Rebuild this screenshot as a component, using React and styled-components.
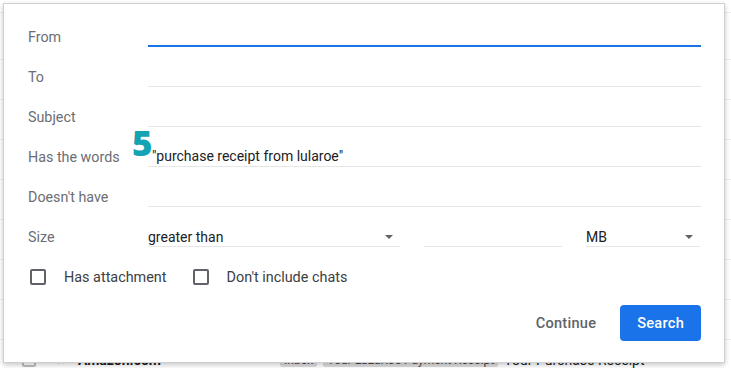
import React from "react";
import styled, { createGlobalStyle } from "styled-components";

const Global = createGlobalStyle`
  html, body { margin: 0; padding: 0; background: #fff; }
  body { font-family: Roboto, "Liberation Sans", Arial, sans-serif; }
`;

const Page = styled.div`
  position: relative;
  width: 731px;
  height: 368px;
  overflow: hidden;
  background: #fff;
`;

const TopStrip = styled.div`
  height: 12px;
  border-bottom: 1px solid #eeeeee;
`;

const ListRow = styled.div`
  height: ${(p) => p.$h || 40}px;
  box-sizing: border-box;
  border-bottom: 1px solid #eeeeee;
  display: grid;
  grid-template-columns: 22px 14px 19px 10px 13px 202px auto auto auto 1fr;
  align-items: center;
  font-size: 14px;
  color: #202124;
`;

const BgBox = styled.span`
  grid-column: 2;
  width: 14px;
  height: 14px;
  border: 2px solid #bdbdbd;
  border-radius: 2px;
  box-sizing: border-box;
`;

const BgStar = styled.span`
  grid-column: 4;
  color: #bbb;
  font-size: 13px;
`;

const BgSender = styled.span`
  grid-column: 6;
  font-weight: 700;
`;

const Chip = styled.span`
  background: #dddddd;
  color: #444;
  font-size: 12px;
  padding: 0 4px;
  margin-right: 6px;
  border-radius: 2px;
`;

const BgSubject = styled.span`
  white-space: nowrap;
`;

const Dialog = styled.div`
  position: absolute;
  top: 3px;
  left: 3px;
  width: 722px;
  height: 360px;
  box-sizing: border-box;
  background: #fff;
  border: 1px solid #cfcfcf;
  box-shadow: 0 2px 5px rgba(0, 0, 0, 0.22);
  padding: 13px 23px 0 24px;
  display: flex;
  flex-direction: column;
`;

const Row = styled.div`
  display: grid;
  grid-template-columns: 120px 1fr;
  align-items: center;
  height: 40px;
`;

const Label = styled.div`
  font-size: 14.3px;
  color: #6b6e72;
`;

const Field = styled.div`
  height: 20px;
  box-sizing: border-box;
  border-bottom: ${(p) => (p.$focused ? "2px solid #1a73e8" : "1px solid #e6e6e6")};
  font-size: 14px;
  line-height: 19px;
  color: #202124;
  padding-left: ${(p) => p.$indent || 0}px;
  white-space: nowrap;
`;

const SizeGroup = styled.div`
  display: grid;
  grid-template-columns: 252px 138px 114px;
  column-gap: 24px;
  align-items: center;
`;

const Select = styled.div`
  height: 20px;
  box-sizing: border-box;
  border-bottom: 1px solid #e6e6e6;
  display: flex;
  align-items: center;
  justify-content: space-between;
  font-size: 14px;
  color: #202124;
  padding-right: 7px;
`;

const Caret = styled.span`
  width: 0;
  height: 0;
  border-left: 4px solid transparent;
  border-right: 4px solid transparent;
  border-top: 4px solid #5f6368;
`;

const CheckRow = styled.div`
  display: flex;
  align-items: center;
  height: 40px;
  padding-left: 2px;
`;

const CheckItem = styled.label`
  display: flex;
  align-items: center;
  gap: 18px;
  margin-right: 26px;
  font-size: 14.4px;
  color: #3c4043;
`;

const Box = styled.span`
  width: 16px;
  height: 16px;
  box-sizing: border-box;
  border: 2px solid #5f6368;
  border-radius: 2px;
`;

const Actions = styled.div`
  display: flex;
  justify-content: flex-end;
  align-items: center;
  gap: 16px;
  margin-top: 8px;
`;

const Button = styled.button`
  height: 36px;
  border: none;
  border-radius: 4px;
  font-family: Roboto, "Liberation Sans", Arial, sans-serif;
  font-size: 14.6px;
  font-weight: 500;
  letter-spacing: 0.25px;
  padding: 0 ${(p) => (p.$primary ? 17 : 8)}px;
  background: ${(p) => (p.$primary ? "#1a73e8" : "transparent")};
  color: ${(p) => (p.$primary ? "#fff" : "#5f6368")};
  cursor: pointer;
`;

const StepBadge = styled.div`
  position: absolute;
  left: 128px;
  top: 119px;
  font-family: "Open Sans", Lato, sans-serif;
  font-weight: 800;
  font-size: 35px;
  line-height: 40px;
  color: #14a3b3;
`;

const fields = [
  { label: "From", focused: true },
  { label: "To" },
  { label: "Subject" },
  { label: "Has the words", value: "\"purchase receipt from lularoe\"", indent: 4 },
  { label: "Doesn't have" },
];

export default function App() {
  return (
    <Page>
      <Global />
      <TopStrip />
      <ListRow $h={47} />
      {[0, 1, 2, 3, 4, 5, 6].map((i) => (
        <ListRow key={i} />
      ))}
      <ListRow>
        <BgBox />
        <BgStar>☆</BgStar>
        <BgSender>Amazon.com</BgSender>
        <Chip>Inbox</Chip>
        <Chip>Your LuLaRoe Payment Receipt</Chip>
        <BgSubject>Your Purchase Receipt</BgSubject>
      </ListRow>
      <Dialog>
        {fields.map((f) => (
          <Row key={f.label}>
            <Label>{f.label}</Label>
            <Field $focused={f.focused} $indent={f.indent}>
              {f.value || ""}
            </Field>
          </Row>
        ))}
        <Row>
          <Label>Size</Label>
          <SizeGroup>
            <Select>
              greater than
              <Caret />
            </Select>
            <Field />
            <Select>
              MB
              <Caret />
            </Select>
          </SizeGroup>
        </Row>
        <CheckRow>
          <CheckItem>
            <Box />
            Has attachment
          </CheckItem>
          <CheckItem>
            <Box />
            Don't include chats
          </CheckItem>
        </CheckRow>
        <Actions>
          <Button>Continue</Button>
          <Button $primary>Search</Button>
        </Actions>
        <StepBadge>5</StepBadge>
      </Dialog>
    </Page>
  );
}
